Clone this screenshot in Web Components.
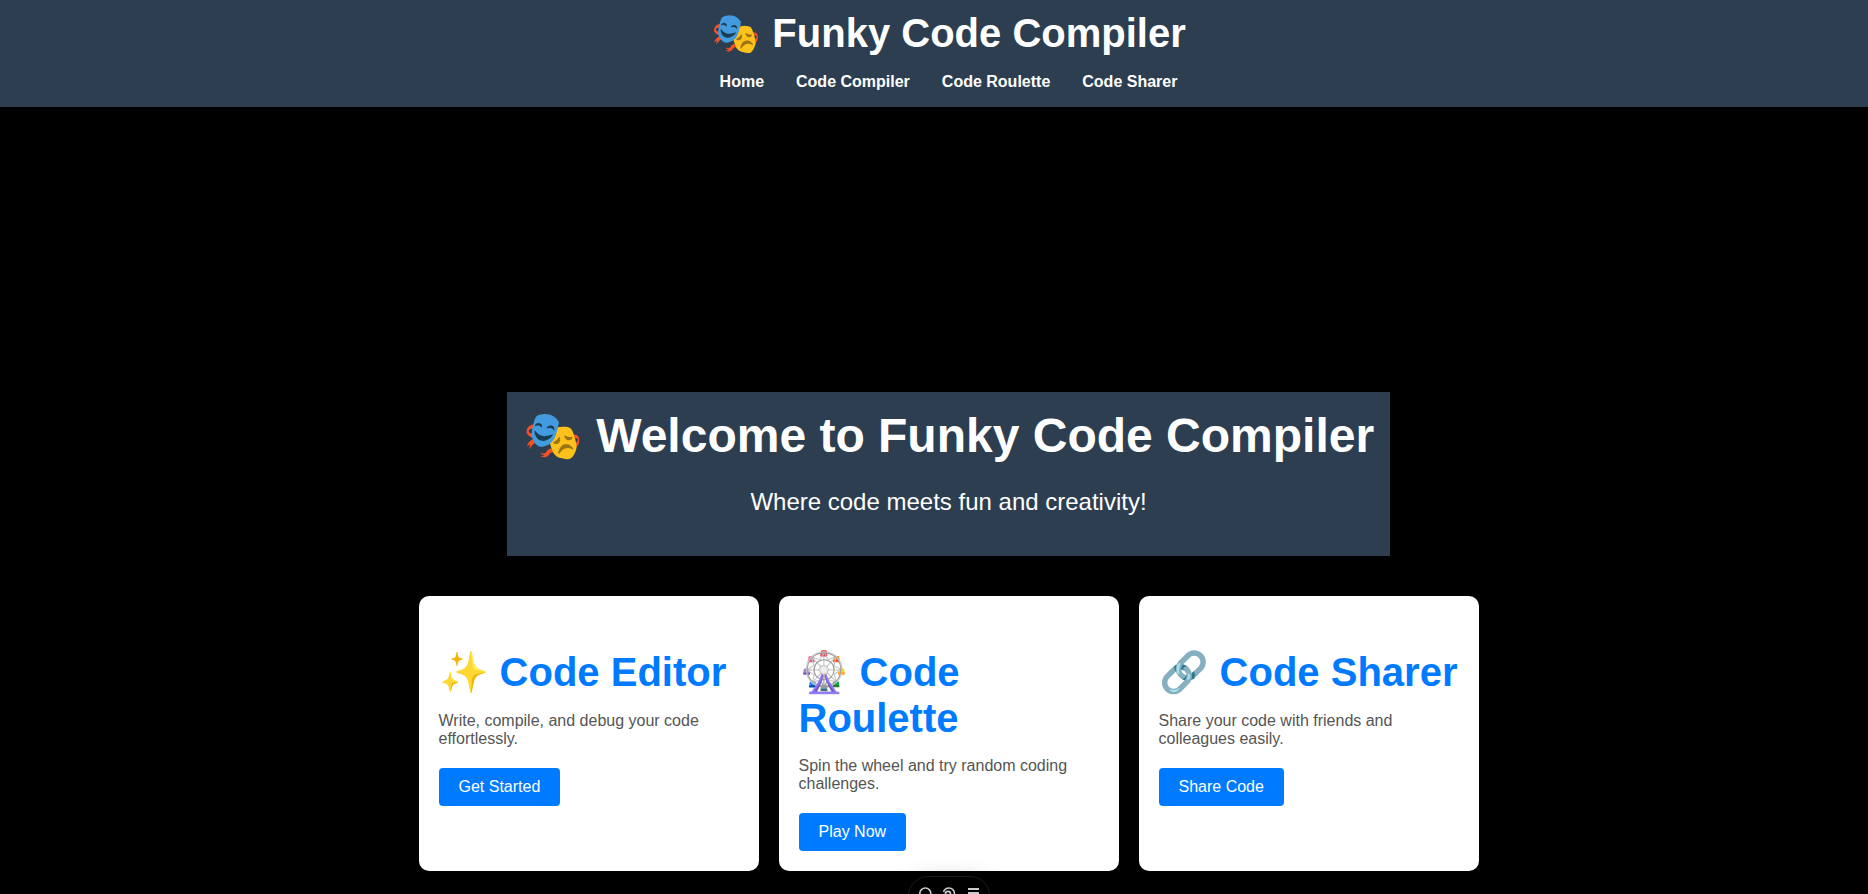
<!DOCTYPE html>
<html lang="en"><head><meta charset="utf-8"><title>Funky Code Compiler</title>
<style>
html{background:#000;overflow:hidden}
body{margin:0;height:894px;overflow:hidden;background:#000;font-family:"Liberation Sans",Arial,sans-serif;font-size:16px}
</style></head><body>
<funky-page>
<site-header slot="header" heading="🎭 Funky Code Compiler"></site-header>
<welcome-banner heading="🎭 Welcome to Funky Code Compiler">Where code meets fun and creativity!</welcome-banner>
<feature-grid>
<feature-card heading="✨ Code Editor" action="Get Started">Write, compile, and debug your code effortlessly.</feature-card>
<feature-card heading="🎡 Code Roulette" action="Play Now">Spin the wheel and try random coding challenges.</feature-card>
<feature-card heading="🔗 Code Sharer" action="Share Code">Share your code with friends and colleagues easily.</feature-card>
</feature-grid>
<tool-dock slot="dock"></tool-dock>
</funky-page>
<script>
const define=(name,markup)=>customElements.define(name,class extends HTMLElement{
  constructor(){super();this.attachShadow({mode:"open"}).innerHTML=markup}
  connectedCallback(){for(const key of ["heading","action"]){const el=this.shadowRoot.querySelector("."+key);if(el)el.textContent=this.getAttribute(key)}}
});
define("funky-page",`<style>:host{display:flex;flex-direction:column;width:1897px;height:894px;position:relative;overflow:hidden}main{display:flex;flex-direction:column;align-items:center;padding-top:285px}</style><slot name="header"></slot><main><slot></slot></main><slot name="dock"></slot>`);
define("site-header",`<style>:host{display:block;box-sizing:border-box;height:107px;padding-top:10px;background:#2c3e50;color:#fff;text-align:center}h1{margin:0;font-size:40px}nav{display:flex;justify-content:center;gap:32px;margin-top:16px;line-height:18px}a{font-weight:bold}</style><h1 class="heading"></h1><nav><a>Home</a><a>Code Compiler</a><a>Code Roulette</a><a>Code Sharer</a></nav>`);
define("welcome-banner",`<style>:host{display:block;box-sizing:border-box;width:883px;height:164px;background:#2c3e50;color:#fff;text-align:center;padding-top:15px}h1{margin:0;font-size:48px;white-space:nowrap}p{margin:24px 0 0;font-size:24px}</style><h1 class="heading"></h1><p><slot></slot></p>`);
define("feature-grid",`<style>:host{display:grid;grid-template-columns:repeat(3,340px);gap:20px;margin-top:40px}</style><slot></slot>`);
define("feature-card",`<style>:host{display:block;box-sizing:border-box;height:275px;background:#fff;border-radius:10px;padding:53px 20px 20px}h2{margin:0;color:#007bff;font-size:40px}p{margin:16px 0 20px;color:#555;line-height:18px}button{display:block;border:0;border-radius:4px;background:#007bff;color:#fff;font:inherit;line-height:18px;padding:10px 20px}</style><h2 class="heading"></h2><p><slot></slot></p><button class="action"></button>`);
define("tool-dock",`<style>:host{position:absolute;left:908px;top:876px;width:82px;height:40px;box-sizing:border-box;border:1px solid #1c1c1c;border-radius:20px;background:#000;box-shadow:0 0 20px rgba(0,0,0,.14);display:flex;gap:8px;padding:9px 8px}svg{width:16px;height:16px;fill:none;stroke:#ccc;stroke-width:1.6}</style><svg viewBox="0 0 16 16"><circle cx="8.300" cy="7.500" r="5.500"/><path d="m12 12 3 3"/></svg><svg viewBox="0 0 16 16"><path d="M2.500 6C3.500 3 5.500 2 8 2a5.500 5.500 0 0 1 0 11"/><circle cx="7" cy="8" r="2.600"/></svg><svg viewBox="0 0 16 16"><path stroke-width="2" d="M3 3h11M3 7h11M3 11h11"/></svg>`);
</script></body></html>
